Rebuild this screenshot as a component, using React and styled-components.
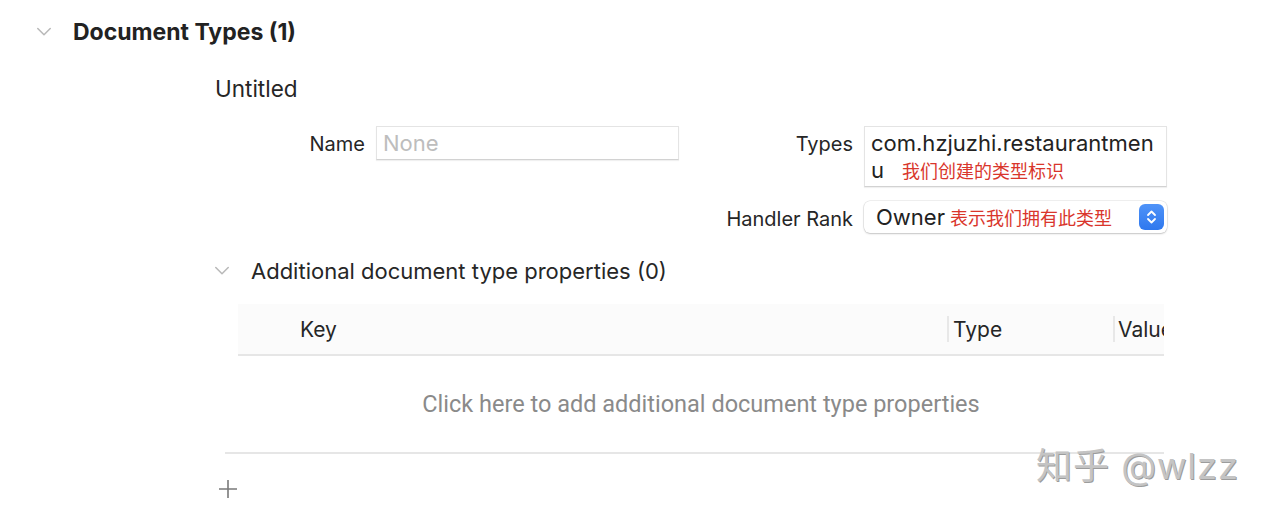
import React from "react";
import styled, { createGlobalStyle } from "styled-components";

const GlobalStyle = createGlobalStyle`
  html, body {
    margin: 0;
    padding: 0;
    background: #ffffff;
  }
  body {
    font-family: Inter, "Noto Sans CJK SC", "Noto Sans", sans-serif;
    color: #262626;
  }
`;

const Page = styled.div`
  position: relative;
  width: 1270px;
  height: 516px;
  overflow: hidden;
  background: #fff;
`;

const SectionHeader = styled.div`
  display: flex;
  align-items: center;
  height: 34px;
  padding-left: ${({ $indent }) => $indent}px;
  gap: ${({ $gap }) => $gap}px;
  margin-top: ${({ $top }) => $top}px;
`;

const Chevron = ({ size = 16 }) => (
  <svg width={size} height={size * 0.6} viewBox="0 0 16 10" fill="none">
    <path d="M1.5 1.5 L8 8 L14.5 1.5" stroke="#b9b9b9" strokeWidth="1.6" strokeLinecap="round" strokeLinejoin="round" />
  </svg>
);

const Title = styled.h2`
  margin: 0;
  font-size: 23px;
  font-weight: 700;
  color: #222;
`;

const SubTitle = styled.span`
  font-size: 22px;
  color: #262626;
`;

const Body = styled.div`
  padding-left: 215px;
`;

const Untitled = styled.div`
  margin-top: 28px;
  font-size: 22.5px;
  color: #262626;
  line-height: 24px;
`;

const FormGrid = styled.div`
  display: grid;
  grid-template-columns: 161px 303px 185px 303px;
  row-gap: 14px;
  margin-top: 25px;
`;

const Label = styled.div`
  text-align: right;
  padding-right: 11px;
  font-size: 20px;
  color: #262626;
  line-height: 36px;
`;

const TextField = styled.div`
  box-sizing: border-box;
  height: ${({ $h }) => $h}px;
  border: 1px solid #e4e4e4;
  border-bottom-color: #d2d2d2;
  box-shadow: 0 1px 1px rgba(0, 0, 0, 0.06);
  background: #fff;
  padding: 3px 6px;
  font-size: 22px;
  line-height: 27px;
  color: ${({ $placeholder }) => ($placeholder ? "#bdbdbd" : "#222")};
  word-break: break-all;
  align-self: start;
`;

const Note = styled.span`
  color: #d9362c;
  font-size: 18px;
  margin-left: 18px;
`;

const Popup = styled.div`
  box-sizing: border-box;
  height: 32px;
  border-radius: 6px;
  background: #fff;
  box-shadow: 0 0 0 0.5px rgba(0, 0, 0, 0.12), 0 1px 2px rgba(0, 0, 0, 0.18);
  display: flex;
  align-items: center;
  padding: 0 3px 0 12px;
  font-size: 22px;
  color: #222;
`;

const PopupText = styled.span`
  flex: 1;
  display: flex;
  align-items: center;
`;

const PopupNote = styled.span`
  color: #d9362c;
  font-size: 18px;
  margin-left: 5px;
`;

const Stepper = styled.div`
  width: 25px;
  height: 26px;
  border-radius: 6px;
  background: linear-gradient(#4f93f8, #2f78ee);
  display: flex;
  align-items: center;
  justify-content: center;
`;

const Table = styled.div`
  margin-left: 23px;
  margin-top: 16px;
  width: 926px;
`;

const HeaderRow = styled.div`
  display: grid;
  grid-template-columns: 709px 166px 1fr;
  height: 50px;
  background: #fbfbfb;
  border-bottom: 2px solid #e6e6e6;
  overflow: hidden;
`;

const HeadCell = styled.div`
  display: flex;
  align-items: center;
  padding-left: ${({ $pad }) => $pad}px;
  font-size: 21px;
  color: #262626;
  white-space: nowrap;
  overflow: hidden;
  border-left: ${({ $divider }) => ($divider ? "2px solid #e8e8e8" : "none")};
  margin: ${({ $divider }) => ($divider ? "12px 0" : "0")};
`;

const EmptyArea = styled.div`
  height: 96px;
  display: flex;
  align-items: center;
  justify-content: center;
  font-family: Roboto, "Liberation Sans", sans-serif;
  font-size: 23.5px;
  color: #8a8a8a;
`;

const BottomLine = styled.div`
  margin-left: 10px;
  width: 939px;
  height: 2px;
  background: #e6e6e6;
`;

const AddButton = styled.div`
  margin-left: 217px;
  margin-top: 24px;
  width: 22px;
  height: 22px;
`;

const Watermark = styled.div`
  position: absolute;
  left: 1036px;
  top: 437px;
  font-size: 36px;
  color: #c4c4c4;
  letter-spacing: 1px;
  text-shadow: 1px 1px 0 #9c9c9c;
  white-space: nowrap;
`;

const StepperIcon = () => (
  <svg width="11" height="16" viewBox="0 0 11 16" fill="none">
    <path d="M2 6 L5.5 2.5 L9 6" stroke="#fff" strokeWidth="1.8" strokeLinecap="round" strokeLinejoin="round" />
    <path d="M2 10 L5.5 13.5 L9 10" stroke="#fff" strokeWidth="1.8" strokeLinecap="round" strokeLinejoin="round" />
  </svg>
);

const PlusIcon = () => (
  <svg width="22" height="22" viewBox="0 0 22 22">
    <path d="M11 2 V20 M2 11 H20" stroke="#7a7a7a" strokeWidth="1.6" />
  </svg>
);

export default function App() {
  return (
    <Page>
      <GlobalStyle />
      <SectionHeader $indent={36} $gap={21} $top={15}>
        <Chevron />
        <Title>Document Types (1)</Title>
      </SectionHeader>

      <Body>
        <Untitled>Untitled</Untitled>
        <FormGrid>
          <Label>Name</Label>
          <TextField $h={34} $placeholder>None</TextField>
          <Label>Types</Label>
          <TextField $h={61}>
            com.hzjuzhi.restaurantmenu<Note>我们创建的类型标识</Note>
          </TextField>

          <div />
          <div />
          <Label>Handler Rank</Label>
          <Popup>
            <PopupText>
              Owner<PopupNote>表示我们拥有此类型</PopupNote>
            </PopupText>
            <Stepper>
              <StepperIcon />
            </Stepper>
          </Popup>
        </FormGrid>
      </Body>

      <SectionHeader $indent={214} $gap={21} $top={17}>
        <Chevron />
        <SubTitle>Additional document type properties (0)</SubTitle>
      </SectionHeader>

      <Body>
        <Table>
          <HeaderRow>
            <HeadCell $pad={62}>Key</HeadCell>
            <HeadCell $pad={4} $divider>Type</HeadCell>
            <HeadCell $pad={3} $divider>Value</HeadCell>
          </HeaderRow>
          <EmptyArea>Click here to add additional document type properties</EmptyArea>
        </Table>
        <BottomLine />
      </Body>

      <AddButton>
        <PlusIcon />
      </AddButton>

      <Watermark>知乎 @wlzz</Watermark>
    </Page>
  );
}
